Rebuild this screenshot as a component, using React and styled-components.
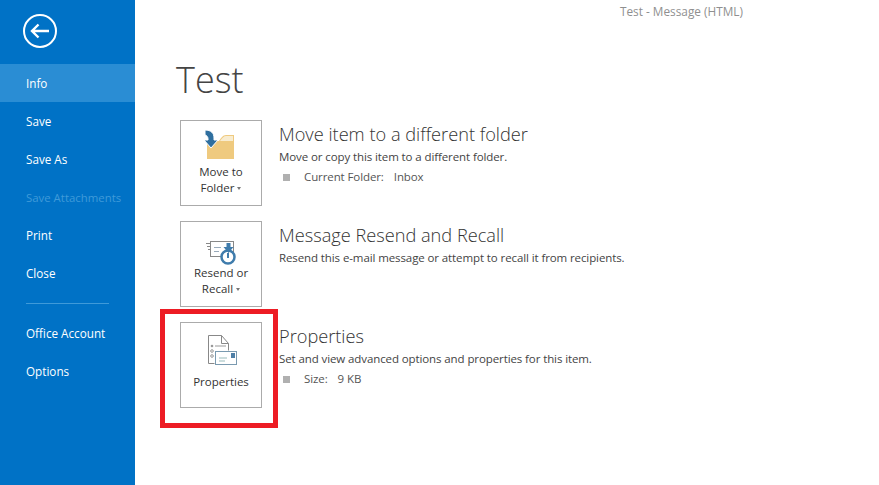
import React from 'react';
import styled, {createGlobalStyle} from 'styled-components';

const GlobalStyle = createGlobalStyle`
  html, body { margin: 0; padding: 0; background: #fff; }
  body { font-family: "Open Sans", "Noto Sans", "Liberation Sans", sans-serif; }
`;

const Page = styled.div`
  display: flex;
  width: 879px;
  height: 485px;
  overflow: hidden;
  background: #fff;
`;

const Sidebar = styled.nav`
  flex: 0 0 135px;
  background: #0072c6;
  display: flex;
  flex-direction: column;
`;

const BackButton = styled.div`
  height: 64px;
  padding-left: 23px;
  display: flex;
  align-items: flex-start;
  padding-top: 14px;
  box-sizing: border-box;
`;

const NavItem = styled.div`
  height: 38px;
  line-height: 39px;
  padding-left: 26px;
  font-size: ${p => (p.$disabled ? '11.4px' : '11.7px')};
  white-space: nowrap;
  color: ${p => (p.$disabled ? '#3f9ad9' : '#fff')};
  background: ${p => (p.$active ? '#2a8dd4' : 'transparent')};
`;

const NavRule = styled.div`
  height: 1px;
  margin: 11px 26px 10px 26px;
  background: #3f9ad9;
`;

const Main = styled.main`
  flex: 1;
  position: relative;
  padding-left: 41px;
`;

const WindowTitle = styled.div`
  height: 24px;
  line-height: 22px;
  padding-left: 444px;
  font-size: 11.8px;
  color: #8f8f8f;
  white-space: nowrap;
`;

const Heading = styled.h1`
  margin: 0;
  height: 96px;
  padding-top: 27px;
  box-sizing: border-box;
  font-size: 36px;
  line-height: 57px;
  font-weight: 300;
  color: #444;
`;

const Sections = styled.div`
  display: flex;
  flex-direction: column;
  gap: 15px;
  padding-left: 4px;
`;

const Section = styled.section`
  display: flex;
  gap: 17px;
`;

const ActionButton = styled.div`
  flex: 0 0 82px;
  height: 86px;
  box-sizing: border-box;
  border: 1px solid #ababab;
  display: flex;
  flex-direction: column;
  align-items: center;
  padding-top: ${p => p.$top}px;
`;

const ActionIcon = styled.svg`
  display: block;
  flex: none;
`;

const ActionLabel = styled.div`
  font-size: 11.5px;
  font-weight: 500;
  line-height: 16px;
  color: #333;
  text-align: center;
  margin-top: ${p => p.$gap || 0}px;
`;

const Caret = styled.span`
  display: inline-block;
  width: 0;
  height: 0;
  margin-left: 3px;
  vertical-align: 2px;
  border-left: 2.5px solid transparent;
  border-right: 2.5px solid transparent;
  border-top: 3px solid #777;
`;

const Details = styled.div`
  display: flex;
  flex-direction: column;
  padding-top: 2px;
`;

const SectionTitle = styled.h2`
  margin: 0 0 2px;
  font-size: 18.2px;
  line-height: 24px;
  font-weight: 300;
  color: #333;
  white-space: nowrap;
`;

const SectionText = styled.p`
  margin: 0;
  font-size: 11.5px;
  line-height: 18px;
  letter-spacing: -0.1px;
  color: #444;
  white-space: nowrap;
`;

const Fact = styled.div`
  display: flex;
  align-items: center;
  margin-top: 1px;
  font-size: 11.5px;
  line-height: 20px;
  letter-spacing: -0.1px;
  color: #555;
  white-space: nowrap;
`;

const Bullet = styled.span`
  width: 7px;
  height: 7px;
  margin: 0 14px 0 4px;
  background: #b0b0b0;
`;

const FactValue = styled.span`
  margin-left: 10px;
`;

const Highlight = styled.div`
  position: absolute;
  left: 25px;
  top: 309px;
  width: 118px;
  height: 119px;
  box-sizing: border-box;
  border: 5px solid #ed1c24;
`;

const BackIcon = () => (
  <svg width="34" height="34" viewBox="0 0 34 34" fill="none" stroke="#fff">
    <circle cx="17" cy="17" r="16" strokeWidth="2" />
    <path d="M9 17h17M15.5 10.5L9 17l6.5 6.5" strokeWidth="2.4" />
  </svg>
);

const MoveIcon = () => (
  <ActionIcon width="40" height="34" viewBox="0 0 40 34">
    <path d="M6 11h12c2-3 4-6 7-6h8v24H6z" fill="#efca7f" />
    <path d="M19 11c2-3 4-5 6-5h7v5z" fill="#f8ecd0" />
    <path d="M4 0c6 0 9 3 9 8v2h4l-7 8-7-8h4V9C7 7 6 5.500 4 5z" fill="#2f6f9f" stroke="#fff" strokeWidth="1" />
  </ActionIcon>
);

const ResendIcon = () => (
  <ActionIcon width="40" height="25" viewBox="0 0 40 25" fill="none">
    <path d="M5 3.500h4M6 6.500h3M7 9.500h2" stroke="#888" />
    <rect x="9.500" y="1.500" width="23" height="15" fill="#fff" stroke="#888" />
    <path d="M13 7.500h7M13 11.500h5" stroke="#9ab" />
    <circle cx="27" cy="17" r="6.500" stroke="#3f7cac" strokeWidth="2.500" fill="#fff" />
    <path d="M25.500 3h4v4h3l-5 6-5-6h3z" fill="#3f7cac" />
    <path d="M27 13v5" stroke="#3f7cac" strokeWidth="2" />
  </ActionIcon>
);

const PropertiesIcon = () => (
  <ActionIcon width="32" height="32" viewBox="0 0 32 32" fill="none">
    <path d="M3.500 1.500h13l7 8v7M3.500 1.500v28h6" stroke="#888" />
    <path d="M16.500 1.500v8h7" stroke="#888" />
    <circle cx="7" cy="12" r="1.300" fill="#999" />
    <circle cx="7" cy="17" r="1.300" stroke="#999" />
    <circle cx="7" cy="22" r="1.300" stroke="#999" />
    <path d="M10 12h11" stroke="#999" />
    <rect x="10.500" y="17.500" width="21" height="13" fill="#fff" stroke="#7a9ab0" />
    <rect x="26" y="19" width="4" height="5" fill="#4e7fa6" />
    <path d="M14 24h8M14 27h6" stroke="#9bb" />
  </ActionIcon>
);

const navTop = [
  {label: 'Info', active: true},
  {label: 'Save'},
  {label: 'Save As'},
  {label: 'Save Attachments', disabled: true},
  {label: 'Print'},
  {label: 'Close'},
];

const App = () => (
  <Page>
    <GlobalStyle />
    <Sidebar>
      <BackButton><BackIcon /></BackButton>
      {navTop.map(item => (
        <NavItem key={item.label} $active={item.active} $disabled={item.disabled}>{item.label}</NavItem>
      ))}
      <NavRule />
      <NavItem>Office Account</NavItem>
      <NavItem>Options</NavItem>
    </Sidebar>
    <Main>
      <WindowTitle>Test - Message (HTML)</WindowTitle>
      <Heading>Test</Heading>
      <Sections>
        <Section>
          <ActionButton $top={9}>
            <MoveIcon />
            <ActionLabel>Move to<br />Folder<Caret /></ActionLabel>
          </ActionButton>
          <Details>
            <SectionTitle>Move item to a different folder</SectionTitle>
            <SectionText>Move or copy this item to a different folder.</SectionText>
            <Fact><Bullet />Current Folder:<FactValue>Inbox</FactValue></Fact>
          </Details>
        </Section>
        <Section>
          <ActionButton $top={18}>
            <ResendIcon />
            <ActionLabel>Resend or<br />Recall<Caret /></ActionLabel>
          </ActionButton>
          <Details>
            <SectionTitle>Message Resend and Recall</SectionTitle>
            <SectionText>Resend this e-mail message or attempt to recall it from recipients.</SectionText>
          </Details>
        </Section>
        <Section>
          <ActionButton $top={11}>
            <PropertiesIcon />
            <ActionLabel $gap={8}>Properties</ActionLabel>
          </ActionButton>
          <Details>
            <SectionTitle>Properties</SectionTitle>
            <SectionText>Set and view advanced options and properties for this item.</SectionText>
            <Fact><Bullet />Size:<FactValue>9 KB</FactValue></Fact>
          </Details>
        </Section>
      </Sections>
      <Highlight />
    </Main>
  </Page>
);

export default App;
